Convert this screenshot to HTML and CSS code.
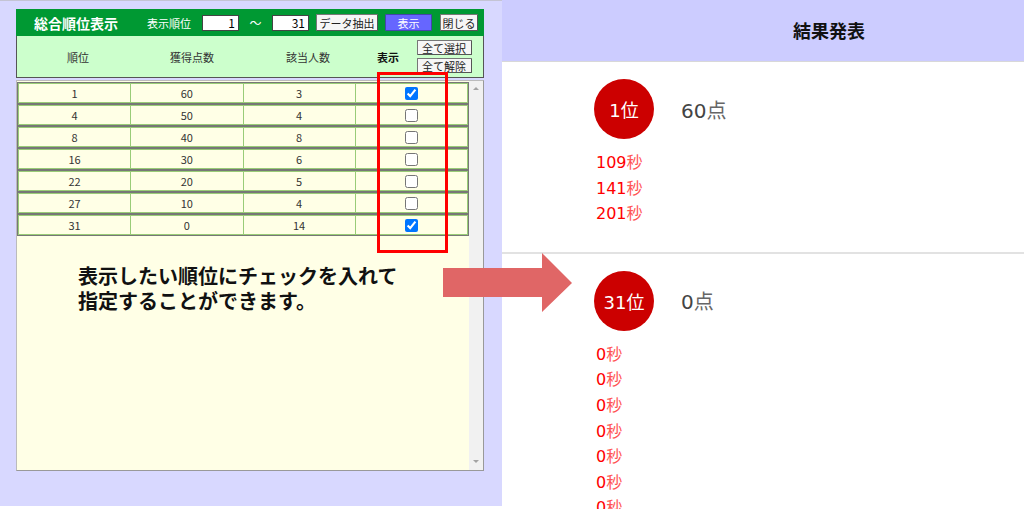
FILE: index.html
```html
<!DOCTYPE html>
<html lang="ja">
<head>
<meta charset="UTF-8">
<meta name="viewport" content="width=device-width, initial-scale=1.0">
<title>総合順位表示</title>
<link rel="stylesheet" href="styles.css">
</head>
<body>

<div class="screen">
  <!-- 管理側：順位一覧 -->
  <div class="admin">
    <div class="panel">
      <div class="topbar">
        <span class="title">総合順位表示</span>
        <span class="range-label">表示順位</span>
        <input class="num" type="text" value="1">
        <span class="tilde">～</span>
        <input class="num" type="text" value="31">
        <button type="button" class="btn btn-extract">データ抽出</button>
        <button type="button" class="btn btn-show">表示</button>
        <button type="button" class="btn btn-close">閉じる</button>
      </div>
      <div class="thead">
        <div class="th">順位</div>
        <div class="th">獲得点数</div>
        <div class="th">該当人数</div>
        <div class="th th-bold">表示</div>
        <div class="th-actions">
          <button type="button" class="btn btn-small">全て選択</button>
          <button type="button" class="btn btn-small">全て解除</button>
        </div>
      </div>
      <div class="scroll">
        <div class="scroll-body">
          <div class="rank-row"><div class="cell">1</div><div class="cell">60</div><div class="cell">3</div><div class="cell"><input type="checkbox" checked></div></div>
          <div class="rank-row"><div class="cell">4</div><div class="cell">50</div><div class="cell">4</div><div class="cell"><input type="checkbox"></div></div>
          <div class="rank-row"><div class="cell">8</div><div class="cell">40</div><div class="cell">8</div><div class="cell"><input type="checkbox"></div></div>
          <div class="rank-row"><div class="cell">16</div><div class="cell">30</div><div class="cell">6</div><div class="cell"><input type="checkbox"></div></div>
          <div class="rank-row"><div class="cell">22</div><div class="cell">20</div><div class="cell">5</div><div class="cell"><input type="checkbox"></div></div>
          <div class="rank-row"><div class="cell">27</div><div class="cell">10</div><div class="cell">4</div><div class="cell"><input type="checkbox"></div></div>
          <div class="rank-row"><div class="cell">31</div><div class="cell">0</div><div class="cell">14</div><div class="cell"><input type="checkbox" checked></div></div>
          <p class="hint"><span class="hint-line">表示したい順位にチェックを入れて</span><span class="hint-line">指定することができます。</span></p>
        </div>
        <div class="scrollbar">
          <span class="arrow-up"></span>
          <span class="arrow-down"></span>
        </div>
      </div>
    </div>
  </div>

  <!-- 表示側：結果発表 -->
  <div class="result">
    <div class="result-head">結果発表</div>
    <div class="rank-block">
      <div class="rank-line">
        <div class="badge">1位</div>
        <div class="score">60<span class="unit">点</span></div>
      </div>
      <ul class="times">
        <li>109<span class="unit">秒</span></li>
        <li>141<span class="unit">秒</span></li>
        <li>201<span class="unit">秒</span></li>
      </ul>
    </div>
    <div class="rank-block">
      <div class="rank-line">
        <div class="badge">31位</div>
        <div class="score">0<span class="unit">点</span></div>
      </div>
      <ul class="times">
        <li>0<span class="unit">秒</span></li>
        <li>0<span class="unit">秒</span></li>
        <li>0<span class="unit">秒</span></li>
        <li>0<span class="unit">秒</span></li>
        <li>0<span class="unit">秒</span></li>
        <li>0<span class="unit">秒</span></li>
        <li>0<span class="unit">秒</span></li>
      </ul>
    </div>
  </div>

  <!-- 注釈 -->
  <div class="mark-box"></div>
  <svg class="arrow" width="130" height="60" viewBox="0 0 130 60">
    <polygon points="0,15 99,15 99,0 129,30 99,59 99,44 0,44" fill="#e06666"/>
  </svg>
</div>

</body>
</html>
```

FILE: styles.css
```css
body {
  margin: 0;
  padding: 0;
  background-color: #fff;
  font-family: "Noto Sans CJK JP", sans-serif;
}
.screen {
  position: relative;
  display: flex;
  width: 1024px;
  height: 509px;
  overflow: hidden;
}
.admin {
  width: 502px;
  height: 506px;
  box-sizing: border-box;
  padding: 8px 0 0 16px;
  background-color: #d8d8ff;
  border-top: 1px solid #c4c4d4;
}
.panel {
  width: 468px;
}
.topbar {
  display: flex;
  align-items: center;
  height: 27px;
  padding-left: 18px;
  background-color: #009933;
  color: #fff;
}
.title {
  width: 113px;
  font-size: 14px;
  font-weight: bold;
}
.range-label {
  width: 55px;
  font-size: 11px;
}
.num {
  width: 37px;
  height: 16px;
  box-sizing: border-box;
  margin: 0;
  padding: 0 3px;
  border: 1px solid #444;
  background-color: #fff;
  font-family: "Noto Sans CJK JP", sans-serif;
  font-size: 12px;
  text-align: right;
  color: #000;
}
.tilde {
  width: 33px;
  text-align: center;
  font-size: 12px;
}
.btn {
  height: 17px;
  box-sizing: border-box;
  margin: 0;
  padding: 0;
  border: 1px solid #777;
  border-right-color: #555;
  border-bottom-color: #555;
  border-radius: 1px;
  background-color: #f6f6f6;
  font-family: "Noto Sans CJK JP", sans-serif;
  font-size: 11px;
  line-height: 14px;
  color: #222;
}
.btn-extract {
  width: 62px;
  margin-left: 7px;
}
.btn-show {
  width: 47px;
  margin-left: 7px;
  background-color: #6666ff;
  border-color: #4444aa;
  color: #fff;
}
.btn-close {
  width: 38px;
  margin-left: 8px;
}
.thead {
  display: grid;
  grid-template-columns: 122px 106px 126px 34px 1fr;
  align-items: center;
  height: 42px;
  box-sizing: border-box;
  border: 1px solid #555;
  border-top: none;
  background-color: #ccffcc;
}
.th {
  text-align: center;
  font-size: 11px;
  color: #333;
}
.th-bold {
  font-weight: bold;
  color: #111;
}
.th-actions {
  display: flex;
  flex-direction: column;
  align-items: center;
  gap: 3px;
}
.btn-small {
  width: 55px;
  height: 15px;
  line-height: 12px;
}
.scroll {
  display: flex;
  height: 391px;
  margin-top: 2px;
  box-sizing: border-box;
  border: 1px solid #bbb;
  border-right-color: #999;
  border-bottom-color: #999;
}
.scroll-body {
  flex: 1;
  padding-top: 1px;
  background-color: #ffffe6;
}
.rank-row {
  display: grid;
  grid-template-columns: repeat(4, 1fr);
  gap: 1px;
  height: 22px;
  box-sizing: border-box;
  padding: 1px;
  border: 1px solid #777;
  background-color: #99cc77;
}
.cell {
  display: flex;
  align-items: center;
  justify-content: center;
  background-color: #ffffe6;
  font-size: 11px;
  color: #333;
}
.cell input {
  width: 13px;
  height: 13px;
  margin: 0;
}
.hint {
  margin: 29px 0 0 61px;
  font-size: 20px;
  font-weight: bold;
  color: #111;
}
.hint-line {
  display: block;
  height: 25px;
  line-height: 21px;
}
.scrollbar {
  display: flex;
  flex-direction: column;
  justify-content: space-between;
  align-items: center;
  width: 14px;
  padding: 6px 0 7px;
  box-sizing: border-box;
  background-color: #f1f1f1;
}
.arrow-up,
.arrow-down {
  width: 0;
  height: 0;
  border-left: 3px solid transparent;
  border-right: 3px solid transparent;
}
.arrow-up {
  border-bottom: 3px solid #a3a3a3;
}
.arrow-down {
  border-top: 3px solid #a3a3a3;
}
.result {
  flex: 1;
  font-family: "DejaVu Sans", "Noto Sans CJK JP", sans-serif;
}
.result-head {
  height: 62px;
  box-sizing: border-box;
  padding-left: 291px;
  border-bottom: 1px solid #d8d8d8;
  background-color: #ccccff;
  font-family: "Noto Sans CJK JP", sans-serif;
  font-size: 18px;
  font-weight: bold;
  line-height: 60px;
  color: #111;
}
.rank-block {
  padding: 17px 0 25px 92px;
  border-bottom: 2px solid #e2e2e2;
}
.rank-line {
  display: flex;
  align-items: center;
}
.badge {
  display: flex;
  align-items: center;
  justify-content: center;
  width: 60px;
  height: 60px;
  border-radius: 50%;
  background-color: #cc0000;
  color: #fff;
  font-size: 18px;
}
.score {
  margin-left: 27px;
  font-size: 20px;
  color: #444;
}
.score .unit {
  color: #666;
}
.times {
  list-style: none;
  margin: 11px 0 0;
  padding: 0 0 0 2px;
  font-size: 16px;
  line-height: 25.6px;
  color: #ff0000;
}
.times .unit {
  color: #f55;
}
.mark-box {
  position: absolute;
  left: 377px;
  top: 72px;
  width: 71px;
  height: 181px;
  box-sizing: border-box;
  border: 3px solid #ff0000;
}
.arrow {
  position: absolute;
  left: 443px;
  top: 253px;
}
```
